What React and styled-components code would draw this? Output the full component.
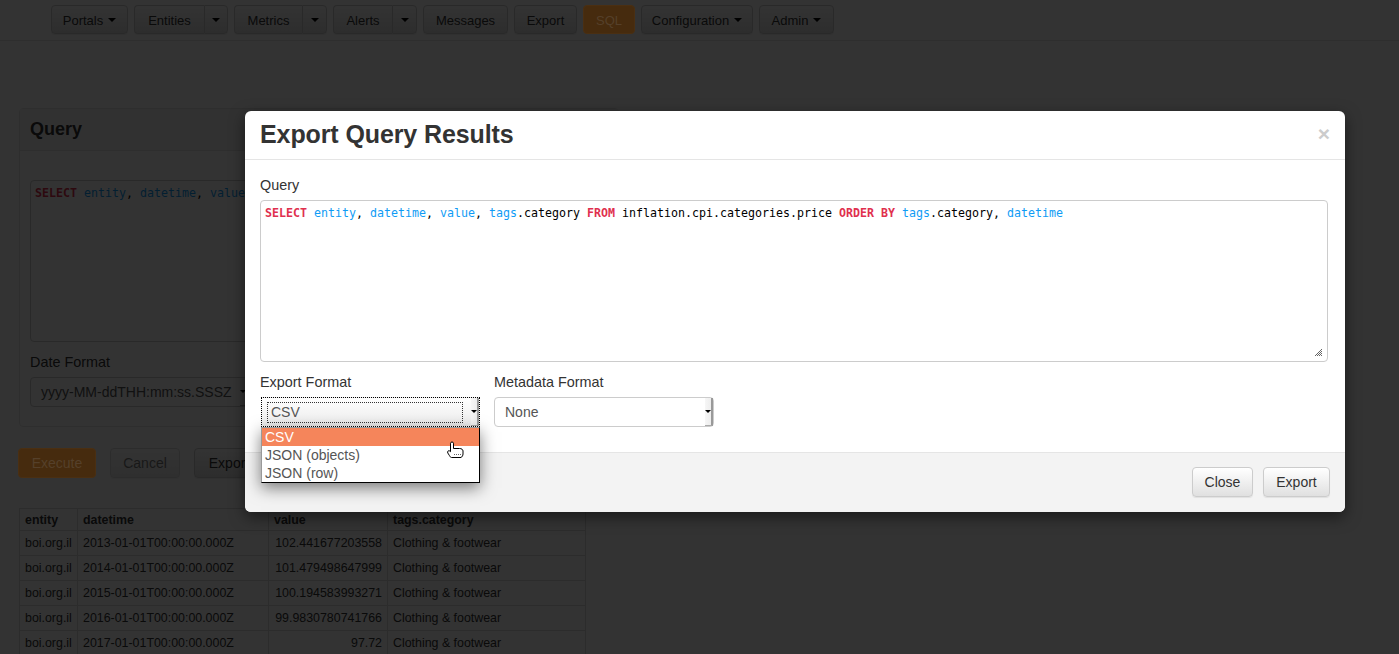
import styled, { createGlobalStyle } from 'styled-components';

const GlobalStyle = createGlobalStyle`
  html, body {
    margin: 0;
    height: 100%;
    overflow: hidden;
    background: #fff;
  }
  body {
    font-family: "Liberation Sans", Arial, sans-serif;
    font-size: 14px;
    color: #333;
  }
  * { box-sizing: border-box; }
`;

const Page = styled.div`
  position: relative;
  width: 1399px;
  height: 654px;
  overflow: hidden;
`;

const Navbar = styled.nav`
  height: 41px;
  padding: 5px 0 0 51px;
  display: flex;
  gap: 6px;
  border-bottom: 1px solid #e7e7e7;
`;

const NavGroup = styled.div`
  display: flex;
`;

const Button = styled.div`
  height: ${p => p.$h || 29}px;
  width: ${p => p.$w}px;
  padding-top: ${p => (p.$h ? 0 : 1)}px;
  display: flex;
  align-items: center;
  justify-content: center;
  gap: 5px;
  font-size: ${p => p.$fs || 13}px;
  color: #333;
  border: 1px solid #ccc;
  border-radius: 4px;
  background: linear-gradient(to bottom, #fff, #e0e0e0);
  box-shadow: 0 1px 1px rgba(0, 0, 0, 0.075);
  opacity: ${p => (p.$disabled ? 0.65 : 1)};
`;

// sits above the backdrop: the dimmed orange is brighter than a black overlay allows
const PrimaryButton = styled(Button)`
  position: relative;
  z-index: 1;
  opacity: 1;
  color: #55402a;
  border-color: #4a2f12;
  background: #462b0e;
  box-shadow: none;
`;

const MainPart = styled(Button)`
  border-radius: 4px 0 0 4px;
  border-right: 0;
`;

const CaretPart = styled(Button)`
  border-radius: 0 4px 4px 0;
`;

const Caret = styled.span`
  width: 0;
  height: 0;
  border-top: 4px solid #000;
  border-left: 4px solid transparent;
  border-right: 4px solid transparent;
`;

const Main = styled.main`
  width: 566px;
  margin: 67px 0 0 19px;
`;

const Panel = styled.section`
  border: 1px solid #e7e7e7;
  border-radius: 4px;
  width: 600px;
  height: 319px;
`;

const PanelHeading = styled.div`
  height: 42px;
  padding: 0 10px;
  display: flex;
  align-items: center;
  background: #f5f5f5;
  border-bottom: 1px solid #e7e7e7;
  font-size: 18px;
  font-weight: bold;
`;

const PanelBody = styled.div`
  padding: 29px 10px 0;
`;

const EditorBox = styled.div`
  position: relative;
  border: 1px solid #ccc;
  border-radius: 4px;
  background: #fff;
  height: ${p => p.$h}px;
  padding: 5px 4px;
  font-family: "DejaVu Sans Mono", monospace;
  font-size: 11.63px;
  line-height: 15px;
  white-space: pre;
  overflow: hidden;
  color: #000;
`;

const Keyword = styled.b`
  color: #e0304e;
`;

const Column = styled.span`
  color: #0f9cf5;
`;

const FieldLabel = styled.div`
  font-size: 14.4px;
  line-height: 20px;
  margin-bottom: 5px;
`;

const SelectBox = styled.div`
  position: relative;
  width: ${p => p.$w}px;
  height: 30px;
  padding-left: 10px;
  display: flex;
  align-items: center;
  background: #fff;
  border: 1px solid #ccc;
  border-radius: 4px;
  color: #555;
  font-size: 14px;
`;

const FocusedSelect = styled(SelectBox)`
  margin-left: 1px;
  border: 1px dotted #000;
  border-radius: 0;
  padding-left: 5px;
  background: linear-gradient(to bottom, #fff, #ececec);
`;

const FocusText = styled.div`
  width: 196px;
  height: 21px;
  padding-left: 3px;
  display: flex;
  align-items: center;
  border: 1px dotted #333;
`;

const SelectArrow = styled.span`
  position: absolute;
  right: 0;
  top: 0;
  bottom: 0;
  width: 8px;
  display: flex;
  align-items: center;
  justify-content: center;
  background: linear-gradient(to right, #f6f6f6, #ededed);
  border-right: 2px solid #999;
  border-bottom: 1px solid #aaa;
  &::after {
    content: '';
    border-top: 3px solid #000;
    border-left: 3px solid transparent;
    border-right: 3px solid transparent;
  }
`;

const DateField = styled.div`
  margin-top: 10px;
`;

const ActionRow = styled.div`
  display: flex;
  gap: 14px;
  margin-top: 21px;
  margin-left: -1px;
`;

const ResultTable = styled.table`
  margin-top: 30px;
  width: 566px;
  border-collapse: collapse;
  table-layout: fixed;
  font-size: 12.4px;
  th, td {
    border: 1px solid #ddd;
    padding: 0 5px;
    white-space: nowrap;
    overflow: hidden;
    text-align: left;
  }
  th { height: 22px; }
  td { height: 25px; }
`;

const ValueCell = styled.td`
  && { text-align: right; }
`;

const Backdrop = styled.div`
  position: absolute;
  inset: 0;
  background: rgba(0, 0, 0, 0.8);
`;

const Modal = styled.div`
  position: absolute;
  z-index: 2;
  left: 245px;
  top: 111px;
  width: 1100px;
  height: 401px;
  display: flex;
  flex-direction: column;
  background: #fff;
  border-radius: 6px;
  box-shadow: 0 5px 15px rgba(0, 0, 0, 0.5);
`;

const ModalHeader = styled.header`
  height: 49px;
  padding: 0 15px 2px;
  display: flex;
  align-items: center;
  justify-content: space-between;
  border-bottom: 1px solid #e5e5e5;
`;

const ModalTitle = styled.h4`
  margin: 0;
  font-size: 25px;
  letter-spacing: -0.1px;
  font-weight: bold;
  color: #333;
`;

const CloseX = styled.span`
  font-size: 21px;
  font-weight: bold;
  color: #ccc;
  line-height: 1;
  margin: 0 0 2px 0;
`;

const ModalBody = styled.div`
  flex: 1;
  padding: 15px 17px 0 15px;
`;

const Grip = styled.svg`
  position: absolute;
  right: 4px;
  bottom: 4px;
`;

const FormatRow = styled.div`
  display: flex;
  gap: 14px;
  margin-top: 10px;
`;

const FormatColumn = styled.div`
  position: relative;
`;

const Dropdown = styled.ul`
  position: absolute;
  left: 1px;
  top: 55px;
  width: 219px;
  margin: 0;
  padding: 0;
  list-style: none;
  background: #fff;
  border: 1px solid #000;
  border-top-color: #999;
  border-left-color: #999;
  box-shadow: 0 5px 15px rgba(0, 0, 0, 0.5);
  font-size: 14px;
  color: #555;
  z-index: 2;
`;

const Option = styled.li`
  height: 18px;
  line-height: 18px;
  padding-left: 3px;
  background: ${p => (p.$active ? '#f5855b' : 'transparent')};
  color: ${p => (p.$active ? '#fff' : '#555')};
`;

const HandCursor = styled.svg`
  position: absolute;
  left: 447px;
  top: 441px;
  z-index: 3;
`;

const ModalFooter = styled.footer`
  height: 60px;
  padding: 14px 15px 0;
  display: flex;
  justify-content: flex-end;
  gap: 10px;
  background: #f3f3f3;
  border-top: 1px solid #e5e5e5;
  border-radius: 0 0 6px 6px;
`;

const rows = [
  ['2013-01-01T00:00:00.000Z', '102.441677203558'],
  ['2014-01-01T00:00:00.000Z', '101.479498647999'],
  ['2015-01-01T00:00:00.000Z', '100.194583993271'],
  ['2016-01-01T00:00:00.000Z', '99.9830780741766'],
  ['2017-01-01T00:00:00.000Z', '97.72'],
];

function SplitButton({ label, mainWidth, caretWidth }) {
  return (
    <NavGroup>
      <MainPart $w={mainWidth}>{label}</MainPart>
      <CaretPart $w={caretWidth}><Caret /></CaretPart>
    </NavGroup>
  );
}

export default function App() {
  return (
    <Page>
      <GlobalStyle />
      <Navbar>
        <Button $w={77}>Portals <Caret /></Button>
        <SplitButton label="Entities" mainWidth={70} caretWidth={24} />
        <SplitButton label="Metrics" mainWidth={68} caretWidth={25} />
        <SplitButton label="Alerts" mainWidth={59} caretWidth={25} />
        <Button $w={85}>Messages</Button>
        <Button $w={63}>Export</Button>
        <PrimaryButton $w={52}>SQL</PrimaryButton>
        <Button $w={112}>Configuration <Caret /></Button>
        <Button $w={75}>Admin <Caret /></Button>
      </Navbar>

      <Main>
        <Panel>
          <PanelHeading>Query</PanelHeading>
          <PanelBody>
            <EditorBox $h={162}>
              <Keyword>SELECT</Keyword> <Column>entity</Column>, <Column>datetime</Column>, <Column>value</Column>
            </EditorBox>
            <DateField>
              <FieldLabel>Date Format</FieldLabel>
              <SelectBox $w={219}>
                yyyy-MM-ddTHH:mm:ss.SSSZ
                <SelectArrow />
              </SelectBox>
            </DateField>
          </PanelBody>
        </Panel>

        <ActionRow>
          <PrimaryButton $w={78} $h={30} $fs={14}>Execute</PrimaryButton>
          <Button $w={70} $h={30} $fs={14} $disabled>Cancel</Button>
          <Button $w={70} $h={30} $fs={14}>Export</Button>
        </ActionRow>

        <ResultTable>
          <colgroup>
            <col width="58" />
            <col width="191" />
            <col width="119" />
            <col width="198" />
          </colgroup>
          <thead>
            <tr>
              <th>entity</th>
              <th>datetime</th>
              <th>value</th>
              <th>tags.category</th>
            </tr>
          </thead>
          <tbody>
            {rows.map(([date, value]) => (
              <tr key={date}>
                <td>boi.org.il</td>
                <td>{date}</td>
                <ValueCell>{value}</ValueCell>
                <td>Clothing &amp; footwear</td>
              </tr>
            ))}
          </tbody>
        </ResultTable>
      </Main>

      <Backdrop />

      <Modal>
        <ModalHeader>
          <ModalTitle>Export Query Results</ModalTitle>
          <CloseX>×</CloseX>
        </ModalHeader>
        <ModalBody>
          <FieldLabel>Query</FieldLabel>
          <EditorBox $h={162}>
            <Keyword>SELECT</Keyword> <Column>entity</Column>, <Column>datetime</Column>, <Column>value</Column>, <Column>tags</Column>.category <Keyword>FROM</Keyword> inflation.cpi.categories.price <Keyword>ORDER BY</Keyword> <Column>tags</Column>.category, <Column>datetime</Column>
            <Grip width="9" height="9" viewBox="0 0 9 9">
              <path d="M8 1 1 8M8 3 3 8M8 5 5 8M8 7 7 8" stroke="#555" strokeWidth="0.9" fill="none" />
            </Grip>
          </EditorBox>
          <FormatRow>
            <FormatColumn>
              <FieldLabel>Export Format</FieldLabel>
              <FocusedSelect $w={219}>
                <FocusText>CSV</FocusText>
                <SelectArrow />
              </FocusedSelect>
              <Dropdown>
                <Option $active>CSV</Option>
                <Option>JSON (objects)</Option>
                <Option>JSON (row)</Option>
              </Dropdown>
            </FormatColumn>
            <FormatColumn>
              <FieldLabel>Metadata Format</FieldLabel>
              <SelectBox $w={220}>
                None
                <SelectArrow />
              </SelectBox>
            </FormatColumn>
          </FormatRow>
        </ModalBody>
        <ModalFooter>
          <Button $w={61} $h={30} $fs={14}>Close</Button>
          <Button $w={67} $h={30} $fs={14}>Export</Button>
        </ModalFooter>
      </Modal>

      <HandCursor width="17" height="18" viewBox="0 0 17 18">
        <path
          d="M3.500 2.200c0-1.600 3-1.600 3 0V7.500h6c2 0 3.500 1 3.500 2.500V13c0 1.500-1 3-2 3.500H4.500c-1 0-1.500-1-2-1.800L.8 12c-.8-1.500.7-3 2-2l.7.7z"
          fill="#fff"
          stroke="#000"
          strokeWidth="1"
        />
        <path d="M7 13.500h7" stroke="#666" strokeWidth="1" strokeDasharray="1 1" fill="none" />
      </HandCursor>
    </Page>
  );
}
